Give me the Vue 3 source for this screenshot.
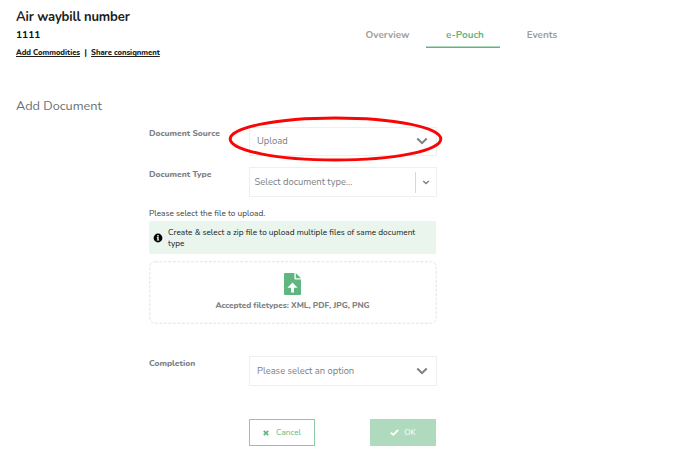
<script setup>
const tabs = [
  { name: 'Overview', cls: 'overview' },
  { name: 'e-Pouch', cls: 'pouch active' },
  { name: 'Events', cls: 'events' },
]
</script>

<template>
  <main class="page">
    <header class="header">
      <div class="ident">
        <h1>Air waybill number</h1>
        <p class="number">1111</p>
        <p class="links"><a>Add Commodities</a><span class="bar">|</span><a>Share consignment</a></p>
      </div>
      <nav class="tabs">
        <a v-for="t in tabs" :key="t.name" class="tab" :class="t.cls">{{ t.name }}</a>
      </nav>
    </header>

    <h2>Add Document</h2>

    <form class="form">
      <div class="row source">
        <label>Document Source</label>
        <div class="select">
          <span>Upload</span>
          <svg class="chev" viewBox="0 0 12 8"><path d="M1.3 1.5 6 6.1 10.7 1.5" /></svg>
          <svg class="ring" viewBox="0 0 215 46"><ellipse cx="107.5" cy="23" rx="105.3" ry="21" /></svg>
        </div>
      </div>
      <div class="row type">
        <label>Document Type</label>
        <div class="select combo">
          <span>Select document type...</span>
          <i class="divider"></i>
          <svg class="small" viewBox="0 0 8 5"><path d="M1.2 1 4 3.6 6.8 1" /></svg>
        </div>
      </div>

      <p class="hint">Please select the file to upload.</p>
      <div class="alert">
        <svg viewBox="0 0 10 10"><circle cx="5" cy="5" r="4.4" /><path d="M4.2 2h1.5v1.4H4.2zM3.8 4.1h1.9v2.6h.6v.9H3.7v-.9h.6V5h-.5z" /></svg>
        <p>Create &amp; select a zip file to upload multiple files of same document<br />type</p>
      </div>
      <div class="drop">
        <svg class="frame" viewBox="0 0 288 63"><rect x=".8" y=".8" width="286.4" height="61.4" rx="5" /></svg>
        <svg class="file" viewBox="0 0 17 22">
          <path class="body" d="M1 0h9.4v5.4c0 .7.5 1.2 1.2 1.2H17V21a1 1 0 0 1-1 1H1a1 1 0 0 1-1-1V1a1 1 0 0 1 1-1zM11.8 0l5.2 5.2h-5.2z" />
          <path class="arrow" d="M8.5 9.6 13.6 14.8H10v4.6H7v-4.6H3.4z" />
        </svg>
        <span class="types">Accepted filetypes: XML, PDF, JPG, PNG</span>
      </div>

      <div class="row completion">
        <label>Completion</label>
        <div class="select">
          <span>Please select an option</span>
          <svg class="chev" viewBox="0 0 12 8"><path d="M1.3 1.5 6 6.1 10.7 1.5" /></svg>
        </div>
      </div>

      <div class="actions">
        <button type="button" class="cancel">
          <svg viewBox="0 0 6 6"><path d="M.8.8 5.2 5.2M5.2.8.8 5.2" /></svg><span>Cancel</span>
        </button>
        <button type="button" class="ok">
          <svg viewBox="0 0 9 7"><path d="M.9 3.7 3.2 5.8 8.1 1" /></svg><span>OK</span>
        </button>
      </div>
    </form>
  </main>
</template>

<style>
body { background: #fff; overflow: hidden; }
</style>

<style scoped>
* { box-sizing: border-box; }
.page { width: 683px; height: 459px; padding: 9px 0 0 16px; font-family: Nunito, "Open Sans", "Noto Sans", sans-serif; color: #7b8084; white-space: nowrap; }
h1, h2, p { margin: 0; }
svg { display: block; flex: none; }
.header { display: flex; height: 88px; }
.ident { width: 335px; color: #202020; }
h1 { font-size: 13px; line-height: 16px; font-weight: 700; letter-spacing: -.12px; }
.number { font-size: 10.2px; line-height: 14px; font-weight: 700; margin-top: 3px; color: #111; }
.links { display: flex; font-size: 7.65px; line-height: 12px; font-weight: 800; margin-top: 5px; letter-spacing: -.04px; }
.links a { text-decoration: underline; text-underline-offset: 1px; text-decoration-thickness: 1px; }
.bar { width: 11px; text-align: center; }
.tabs { display: flex; height: 39px; padding-top: 16px; }
.tab { height: 23px; font-size: 9.9px; line-height: 20px; font-weight: 700; text-align: center; color: #9c9c9c; }
.overview { width: 75px; padding-right: 2px; }
.pouch { width: 74px; padding-left: 4px; }
.events { width: 84px; }
.active { color: #5fb67e; border-bottom: 1px solid #5fb67e; box-shadow: inset 0 -1px #afdabe; }
h2 { font-size: 12.7px; line-height: 18px; font-weight: 400; color: #687076; }
.form { width: 287px; margin: 12px 0 0 133px; }
.row { display: flex; justify-content: space-between; }
label { font-size: 8.45px; line-height: 12px; font-weight: 800; }
.select { position: relative; display: flex; align-items: center; justify-content: space-between; width: 188px; height: 30px; margin-right: -1px; padding: 0 8px 0 7px; border: 1px solid #eeefef; font-size: 9.38px; }
.chev { width: 12px; height: 8px; fill: none; stroke: #7b8084; stroke-width: 2; }
.source .select { height: 29px; padding-bottom: 2px; }
.ring { position: absolute; left: -22px; top: -12px; width: 215px; height: 46px; fill: none; stroke: #fa0505; stroke-width: 3; }
.type { margin-top: 11px; }
.type label { padding-top: 1px; }
.combo { padding: 0 6px 0 4.5px; }
.divider { width: 1px; height: 21px; margin-left: auto; background: #d6d8d9; }
.small { width: 8px; height: 5px; margin-left: 6px; fill: none; stroke: #7b8084; stroke-width: 1.4; }
.hint { margin-top: 11px; font-size: 8.3px; line-height: 12px; color: #3c4044; }
.alert { display: flex; align-items: center; height: 33px; margin-top: 1px; padding-left: 4px; border-radius: 2px; background: #eaf5ee; color: #151a17; font-size: 8.27px; line-height: 11px; }
.alert svg { width: 10px; height: 10px; margin-right: 5px; fill: #000; }
.alert path { fill: #eaf5ee; }
.drop { position: relative; display: flex; flex-direction: column; align-items: center; height: 63px; margin-top: 7px; padding-top: 12px; }
.frame { position: absolute; inset: 0; width: 288px; height: 63px; fill: none; stroke: #e2e3e4; stroke-width: 1; stroke-dasharray: 3 1.5; }
.file { width: 17px; height: 22px; }
.body { fill: #5fb67e; }
.arrow { fill: #fff; }
.types { margin-top: 5px; font-size: 8.2px; line-height: 12px; font-weight: 800; letter-spacing: -.04px; color: #828282; }
.completion { margin-top: 32px; }
.completion label { padding-top: 1px; }
.completion .select { padding-bottom: 1px; }
.actions { display: flex; justify-content: space-between; margin: 33px 0 0 100px; }
button { display: flex; align-items: center; justify-content: center; width: 66px; height: 27px; padding: 0; border: 1px solid #8bcba3; background: #fff; color: #5fb67e; font: 400 8.2px/12px Nunito, "Open Sans", "Noto Sans", sans-serif; }
.cancel svg { width: 6px; height: 6px; margin-right: 7px; stroke: #5fb67e; stroke-width: 1.7; }
.ok { background: #afdabe; border-color: #afdabe; color: #fff; }
.ok svg { width: 9px; height: 7px; margin-right: 5px; fill: none; stroke: #fff; stroke-width: 1.8; }
</style>
